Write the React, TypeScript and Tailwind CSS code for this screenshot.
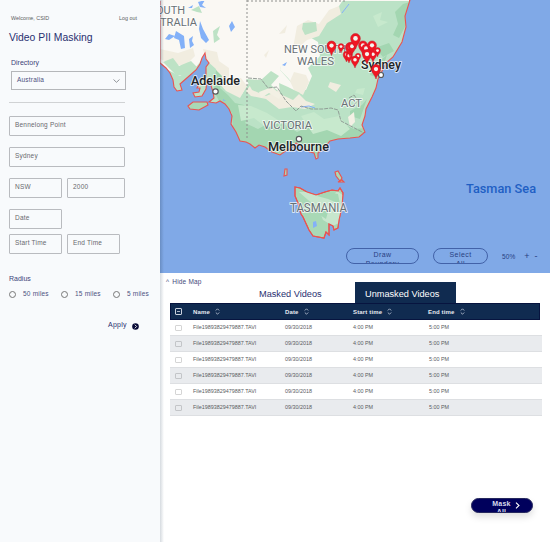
import type { ReactNode } from "react";

const MAINLAND =
  "M0 63L6 68L10 73L13 80L14 87L17 91L22 90L20 84L28 77L36 70L40 64L42 58L45 53L46 59L49 63L46 67L46 77L41 80L37 88L40 88L39 92L33 93L35 97L42 96L46 89L47 80L50 82L53 92L54 98L49 102L56 103L60 101L65 104L69 109L72 116L71 124L76 132L80 141L86 142L90 144L95 148L99 145L105 147L112 152L120 155L127 150L132 148L136 143L141 146L145 149L150 152L154 153L156 159L158 158L158 153L163 149L170 141L178 139L190 138L199 137L205 132L202 125L205 116L206 109L212 97L216 88L218 79L226 63L233 57L242 42L246 27L245 16L250 0L0 0Z";
const TASMANIA =
  "M135 187L140 188L147 192L156 195L165 192L172 190L178 191L180 188L183 193L182 207L179 220L178 228L174 230L173 226L169 224L169 235L166 232L164 238L153 236L149 230L143 217L141 214L138 203L135 196Z";

const PINS: [number, number, number][] = [
  [171.5, 55.5, 1.08], [181, 53, 0.7], [186.5, 62, 0.8], [189, 63, 0.8], [190, 57, 1.08],
  [192, 55, 0.95], [195.5, 49, 1.15], [198, 62, 0.65], [195, 68, 0.9], [203, 55, 1.05],
  [206, 57, 0.95], [212, 55, 1.05], [217.5, 57, 0.7], [213, 62, 0.85], [207, 64, 1.08], [216, 79, 1.08],
];

function Halo({ x, y, size, width, color = "#697175", weight = 400, children }: {
  x: number; y: number; size: number; width: number; color?: string; weight?: number; children: ReactNode;
}) {
  return (
    <text x={x} y={y} fontSize={size} fontWeight={weight} textLength={width} lengthAdjust="spacingAndGlyphs" fill={color}
      stroke="#ffffff" strokeOpacity="0.7" strokeWidth="2" paintOrder="stroke" strokeLinejoin="round">
      {children}
    </text>
  );
}

function CoastMap() {
  return (
    <svg className="block h-[273px] w-[390px] font-['Roboto','Liberation_Sans',sans-serif] font-medium" viewBox="0 0 390 273">
      <defs>
        <clipPath id="land"><path d={MAINLAND} /></clipPath>
        <clipPath id="tas"><path d={TASMANIA} /></clipPath>
        <linearGradient id="edge"><stop stopColor="#344f70" stopOpacity=".3" /><stop offset="1" stopColor="#344f70" stopOpacity="0" /></linearGradient>
      </defs>
      <rect width="390" height="273" fill="#80a9e7" />
      <path d={MAINLAND} fill="#bbe2c6" />
      <g clipPath="url(#land)">
        <path d="M0 0H183L175 12L167 18L159 28L148 35L137 42L132 54L122 62L120 70L130 81L137 91L129 99L117 96L110 86L98 80L88 84L82 94L70 91L60 84L59 66L54 58L44 57L36 67L20 76L8 70L0 62Z" fill="#faf8f3" />
        <path d="M124 40L148 36L158 42L160 56L148 68L152 76L146 90L136 88L128 78L120 70L122 56Z" fill="#faf8f3" />
        <path d="M0 49L18 53L33 48L35 56L26 65L14 65L0 59ZM43 49L57 52L59 61L69 68L69 78L81 78L87 86L80 98L66 91L58 82L56 69L46 60ZM92 83L111 87L121 92L136 91L146 101L155 104L145 109L132 107L119 109L106 99L91 96L86 91ZM104 55L109 50L106 58ZM119 34L127 25L125 33ZM137 26L148 20L159 24L169 10L179 6L181 14L167 23L159 36L147 40L139 47L133 48ZM134 72L146 75L149 82L143 95L134 90L130 81ZM170 82L181 85L176 92L168 87Z" fill="#f1ede0" />
        <path d="M3 62L13 58L19 66L31 61L38 68L27 76L16 75ZM53 31L60 26L57 35L60 39L54 43ZM31 10L39 6L42 13L37 12ZM86 79L101 80L111 71L119 76L111 85L118 91L106 96L92 90ZM119 83L128 87L140 93L133 100L120 94ZM143 23L156 22L157 31L145 35L142 29Z" fill="#bde2c5" />
        <path d="M56 70L62 76L60 88L68 95L75 103L84 105L91 113L85 123L98 129L111 122L124 124L137 132L154 124L169 129L181 123L194 129L206 128L199 139L173 143L158 158L148 150L130 151L118 156L94 149L73 137L72 113L59 101L54 91ZM190 111L202 105L207 99L200 119L190 116ZM213 66L227 55L223 67L216 77L210 75ZM235 12L243 4L250 2L246 25L239 38L233 35L238 24ZM215 48L229 43L234 51L223 57Z" fill="#a3d6b1" />
        <path d="M78 105L91 106L107 113L121 122L107 128L94 118L81 121ZM141 116L154 112L164 119L179 116L190 129L181 136L167 130L153 134ZM213 16L222 12L220 20L228 22L218 27ZM197 89L205 88L203 95L195 93Z" fill="#c7e9cd" />
        <path d="M188 117L194 112L195 122L190 127ZM99 92L112 87L121 95L119 99L109 93L101 98Z" fill="#f3f0e4" />
        <path d="M40 21L43 29L49 40L46 43L41 38L39 29ZM69 26L72 21L75 27L71 32ZM16 31L24 36L25 48L21 49L19 40L14 38ZM5 39L9 34L15 36L9 40ZM29 39L33 36L32 41L34 45L30 48ZM28 8L33 5L32 8ZM38 2L45 0L42 5L46 8L40 7ZM122 65L127 62L125 66ZM63 99L66 101L63 101Z" fill="#83b1f8" />
        <path d="M182 13L189 4M141 107L149 106L155 108M135 151l2 0" fill="none" stroke="#83b1f8" />
      </g>
      <path d={MAINLAND} fill="none" stroke="#ea5350" strokeWidth="1.1" />
      <rect width="249" height="1" fill="#faf8f3" />
      <path d="M87 0V138M87 1H185" fill="none" stroke="#8f908d" strokeDasharray="2 2" />
      <path d="M88 78L101 79L108 88L117 87L126 101L136 111L141 106L151 109L163 109L171 108L178 110L181 121L204 133M189 98L194 95L198 101L191 107" fill="none" stroke="#8b9590" strokeWidth=".9" strokeDasharray="4 1" />
      <g fill="#a9d9b6" stroke="#ea5350" strokeWidth="1.1">
        <path d="M28 106L33 102L47 102L48 105L39 110L30 109Z" />
        <path d="M125 169L127 169L127 175L124 176Z" />
        <path d="M175 172L178 171L182 178L180 181L176 176ZM178 182L182 180L184 182Z" />
        <path d={TASMANIA} />
      </g>
      <g clipPath="url(#tas)">
        <path d="M139 192L148 192L159 196L172 197L177 191L184 196L182 221L173 226L163 220L158 207L148 200Z" fill="#c7e6cd" />
        <path d="M157 196L168 192L178 194L180 204L168 199ZM160 207L168 212L166 219L160 215Z" fill="#a5d8b4" />
        <path d="M153 222L156 221L157 226L153 228Z" fill="#83b1f8" />
      </g>
      <path d={TASMANIA} fill="none" stroke="#ea5350" strokeWidth="1.1" />
      <Halo x={-4} y={13.5} size={11} width={29}>OUTH</Halo>
      <Halo x={0} y={25.5} size={11} width={37}>TRALIA</Halo>
      <Halo x={124} y={53} size={11.5} width={62}>NEW SOUTH</Halo>
      <Halo x={137} y={65} size={11.5} width={37}>WALES</Halo>
      <Halo x={181} y={107} size={11.5} width={21}>ACT</Halo>
      <Halo x={103} y={129} size={11.5} width={49}>VICTORIA</Halo>
      <Halo x={130} y={212} size={12} width={57}>TASMANIA</Halo>
      <Halo x={31} y={85} size={13} width={49} weight={500} color="#202326">Adelaide</Halo>
      <Halo x={108} y={151} size={13} width={61} weight={500} color="#202326">Melbourne</Halo>
      <Halo x={201} y={69} size={13} width={40} weight={500} color="#202326">Sydney</Halo>
      <text x="306" y="193" fontSize="13" textLength="70" lengthAdjust="spacingAndGlyphs" fill="#1f5fc4">Tasman Sea</text>
      <g fill="#ffffff" stroke="#55595b" strokeWidth="1.2">
        <circle cx="55.5" cy="91.5" r="2.7" /><circle cx="139" cy="139" r="2.7" /><circle cx="221" cy="75" r="2.5" />
      </g>
      {PINS.map(([x, y, s], i) => (
        <g key={i} transform={`translate(${x} ${y}) scale(${s})`}>
          <path d="M0 0C-1 -4 -4.2 -5.5 -4.2 -9.2A4.2 4.2 0 0 1 4.2 -9.2C4.2 -5.5 1 -4 0 0Z" fill="#f01622" stroke="#c51b2a" strokeWidth=".5" />
          <circle cy="-9.2" r="2" fill="#f6f3ee" />
        </g>
      ))}
      <rect width="4" height="273" fill="url(#edge)" />
    </svg>
  );
}

function Field({ label, className }: { label: string; className: string }) {
  return (
    <div className={`flex h-[20px] items-center rounded-[1px] border border-[#b9bbbf] pl-[5px] text-[6.5px] leading-none tracking-[0.2px] text-[#68696e] ${className}`}>
      {label}
    </div>
  );
}

function Radio({ label }: { label: string }) {
  return (
    <div className="flex w-[52px] shrink-0 items-center gap-[7px] whitespace-nowrap text-[6.5px] leading-none tracking-[0.2px] text-[#4c507f]">
      <span className="size-[7px] shrink-0 rounded-full border border-[#777]" />
      {label}
    </div>
  );
}

function Sidebar() {
  return (
    <aside className="h-[542px] w-[160px] shrink-0 overflow-hidden bg-[#f8fafc] pl-[9px]">
      <div className="flex w-[128px] justify-between pt-[14px] pl-[2px] text-[5.4px] leading-[8px] text-[#5c5e62]">
        <span>Welcome, CSID</span><span>Log out</span>
      </div>
      <h1 className="mt-[9px] text-[10.4px] leading-[13px] whitespace-nowrap text-[#292f70]">Video PII Masking</h1>
      <div className="mt-[15px] pl-[2px] text-[7px] leading-[8px] text-[#3d4278]">Directory</div>
      <div className="mt-[4px] ml-[2px] flex h-[19px] w-[115px] items-center justify-between border border-[#b5b7ba] pr-[5px] pl-[5px] text-[6.5px] leading-none tracking-[0.2px] text-[#4c507f]">
        <span className="-mt-[1px]">Australia</span>
        <svg className="w-[7px]" viewBox="0 0 7 4" fill="none" stroke="#777b80" strokeWidth=".8"><path d="M.5 .5L3.5 3.3L6.5 .5" /></svg>
      </div>
      <div className="mt-[12px] h-px w-[116px] bg-[#d0d2d4]" />
      <Field label="Bennelong Point" className="mt-[13px] w-[116px] pb-[1px]" />
      <Field label="Sydney" className="mt-[11px] w-[116px] pb-[1px]" />
      <div className="mt-[11px] flex gap-[5px]">
        <Field label="NSW" className="w-[53px] pb-[1px]" />
        <Field label="2000" className="w-[58px] pb-[1px]" />
      </div>
      <Field label="Date" className="mt-[11px] w-[53px] pb-[1px]" />
      <div className="mt-[5px] flex gap-[5px]">
        <Field label="Start Time" className="w-[53px] pb-[1px]" />
        <Field label="End Time" className="w-[53px] pb-[1px]" />
      </div>
      <div className="mt-[21px] text-[7px] leading-[8px] text-[#3d4278]">Radius</div>
      <div className="mt-[7px] flex h-[8px] items-center">
        <Radio label="50 miles" /><Radio label="15 miles" /><Radio label="5 miles" />
      </div>
      <div className="mt-[22px] flex items-center pl-[99px] text-[7px] leading-[10px] tracking-[0.25px] text-[#292f70]">
        <span>Apply</span>
        <svg className="mt-[2px] ml-[5px] size-[7px] shrink-0" viewBox="0 0 7 7"><circle cx="3.5" cy="3.5" r="3.3" fill="#070936" /><path d="M2.8 1.7L4.6 3.5L2.8 5.3" fill="none" stroke="#fff" strokeWidth=".9" /></svg>
      </div>
    </aside>
  );
}

function Sort() {
  return (
    <svg className="h-[7px] w-[5px]" viewBox="0 0 5 7" fill="none" stroke="#c8d1df" strokeWidth=".8">
      <path d="M.8 2.5L2.5 .8L4.2 2.5M.8 4.5L2.5 6.2L4.2 4.5" />
    </svg>
  );
}

const COLUMNS = ["Name", "Date", "Start time", "End time"];

function VideoTable() {
  return (
    <div className="ml-[10px] w-[372px]">
      <div className="grid h-[17px] w-[370px] grid-cols-[22px_92px_68px_75px_1fr] items-center border border-[#07143f] bg-[#102b50] text-[6px] font-bold leading-none tracking-[0.15px] text-[#e6eaf1]">
        <span className="relative ml-[4px] size-[7px] rounded-[1px] border border-[#c9d0dc]"><span className="absolute top-[2px] left-[1px] h-px w-[3px] bg-[#aab5c8]" /></span>
        {COLUMNS.map((title) => (
          <div key={title} className="flex items-center gap-[5px] whitespace-nowrap">{title}<Sort /></div>
        ))}
      </div>
      {Array.from({ length: 6 }, (_, i) => (
        <div key={i} className={`grid h-[16px] grid-cols-[23px_92px_68px_76px_1fr] items-center border-b border-[#dddfe2] text-[5.4px] leading-none text-[#5a5c5f] ${i % 2 ? "bg-[#e9ebee]" : "bg-white"}`}>
          <span className={`ml-[5px] h-[6px] w-[7px] rounded-[1px] border ${i % 2 ? "border-[#c3c5c8]" : "border-[#d5d5d5]"}`} />
          <span>File19893829479887.TAVI</span><span>09/30/2018</span><span>4:00 PM</span><span>5:00 PM</span>
        </div>
      ))}
    </div>
  );
}

export default function App() {
  return (
    <div className="flex h-[542px] w-[550px] overflow-hidden bg-white font-['Liberation_Sans',Arial,sans-serif]">
      <Sidebar />
      <main className="relative h-[542px] w-[390px] shrink-0 overflow-hidden">
        <div className="relative h-[273px]">
          <CoastMap />
          <div className="absolute top-[248px] left-[186px] flex items-start text-[7px] leading-[9px] tracking-[0.45px] text-[#283f83]">
            <div className="h-[16px] w-[73px] overflow-hidden rounded-full border border-[#4262a8] px-[14px] pt-px text-center">Draw Boundary</div>
            <div className="ml-[14px] h-[16px] w-[55px] overflow-hidden rounded-full border border-[#4262a8] px-[12px] pt-px text-center">Select All</div>
            <span className="mt-[4px] ml-[14px] text-[6.5px] tracking-[0.1px]">50%</span>
            <span className="mt-[4px] ml-[9px] text-[9px] tracking-normal">+</span>
            <span className="mt-[4px] ml-[5px] text-[9px] tracking-normal">-</span>
          </div>
        </div>
        <div className="relative flex h-[30px] items-start">
          <div className="mt-[5px] ml-[6px] w-[93px] text-[6.5px] leading-[8px] tracking-[0.2px] whitespace-nowrap text-[#444979]"><span className="mr-[3px]">^</span>Hide Map</div>
          <div className="mt-[15px] w-[96px] text-[9.2px] leading-[12px] whitespace-nowrap text-[#292f70]">Masked Videos</div>
          <div className="mt-[9px] h-[21px] w-[101px] bg-[#102b50] pt-[6px] pl-[10px] text-[9.2px] leading-[12px] whitespace-nowrap text-white">Unmasked Videos</div>
        </div>
        <VideoTable />
        <div className="mt-[82px] ml-[311px] flex h-[15px] w-[62px] justify-end overflow-hidden rounded-full border border-[#25275d] bg-[#00005c] pr-[12px] text-[7px] font-bold leading-[8px] tracking-[0.2px] text-[#d9dbed] shadow-[0_4px_7px_#0002]">
          <div className="mt-[1px] w-[23px] text-center">Mask<br />All</div>
          <svg className="mt-[3px] ml-[2px] h-[7px] w-[5px]" viewBox="0 0 5 7" fill="none" stroke="#fff" strokeWidth="1.1"><path d="M1 .7L4 3.5L1 6.3" /></svg>
        </div>
        <div className="absolute top-[273px] left-0 h-[269px] w-[4px] bg-linear-to-r from-[#d6dbe0] to-transparent" />
      </main>
    </div>
  );
}
